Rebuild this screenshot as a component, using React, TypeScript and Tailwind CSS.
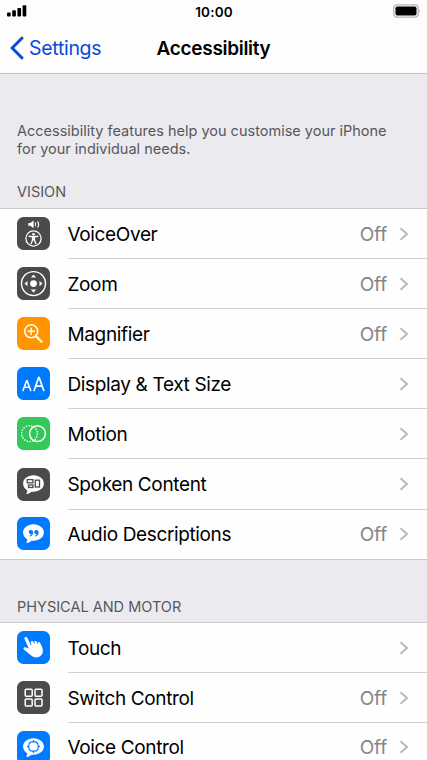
import type { ReactNode } from "react";

const dark = "bg-[#4b4b4b]";
const blue = "bg-[#007aff]";

function Icon({ className, children }: { className: string; children: ReactNode }) {
  return (
    <div className={`mb-px h-[33px] w-[33px] shrink-0 overflow-hidden rounded-[6.5px] text-white ${className}`}>
      <svg viewBox="0 0 33 33" className="h-full w-full" fill="none" stroke="currentColor">
        {children}
      </svg>
    </div>
  );
}

function VoiceOverIcon() {
  return (
    <Icon className={dark}>
      <path d="M11.3 6h2l3.3-2.4v7.6l-3.3-2.4h-2z" fill="currentColor" stroke="none" />
      <path d="M18.2 5.5q1.3 1.9 0 3.8M20.5 4.3q2.3 3.1 0 6.2" strokeWidth="1.1" />
      <circle cx="16.5" cy="21.5" r="7.6" strokeWidth="1.3" />
      <circle cx="16.5" cy="17.3" r="1.4" fill="currentColor" stroke="none" />
      <path
        d="M12.2 19.3l3.2.5h2.2l3.2-.5M16.5 19.7v3M15.6 19.7v3.2l-1.5 3.8M17.4 19.7v3.2l1.5 3.8"
        strokeWidth="1.4"
        strokeLinecap="round"
        strokeLinejoin="round"
      />
    </Icon>
  );
}

function ZoomIcon() {
  return (
    <Icon className={dark}>
      <circle cx="16.5" cy="16.6" r="12" strokeWidth="1.4" />
      <circle cx="16.5" cy="16.6" r="3.4" fill="currentColor" stroke="none" />
      <path
        d="M16.5 7.500l2.600 3.100h-5.200zM16.500 25.700l2.600-3.100h-5.200zM7.400 16.600l3.100-2.600v5.200zM25.600 16.600l-3.100-2.600v5.200z"
        fill="currentColor"
        stroke="none"
      />
    </Icon>
  );
}

function MagnifierIcon() {
  return (
    <Icon className="bg-[#ff9500]">
      <circle cx="14.2" cy="14.3" r="6.5" strokeWidth="1.5" />
      <path d="M14.2 11.100v6.400M11 14.300h6.400" strokeWidth="1.4" strokeLinecap="round" />
      <path d="M19.100 19.200l5.500 5.600" strokeWidth="2.3" strokeLinecap="round" />
    </Icon>
  );
}

function TextSizeIcon() {
  return (
    <Icon className={blue}>
      <path d="M6 23.500l3.600-9.600h.5l3.600 9.600M7.400 20.300h4.900" strokeWidth="1.6" strokeLinecap="round" />
      <path d="M17.100 23.500l4.500-12.800h.6l4.500 12.800M18.700 19.200h6.400" strokeWidth="1.7" strokeLinecap="round" />
    </Icon>
  );
}

function MotionIcon() {
  return (
    <Icon className="bg-[#34c759]">
      <circle cx="12.5" cy="16.6" r="7.9" strokeWidth="1.4" strokeDasharray="1.4 1.35" />
      <circle cx="20.5" cy="16.6" r="7.9" strokeWidth="1.5" />
    </Icon>
  );
}

function Bubble() {
  return (
    <path
      d="M16.5 7.3c5.8 0 10.4 3.6 10.4 8.3s-4.6 8.2-10.4 8.200c-.7 0-1.3 0-1.9-.1-1.3 1.300-3 2-4.800 2.200-.5 0-.6-.4-.3-.8.6-.8.9-1.700.8-2.600-2.600-1.500-4.200-4-4.200-6.900 0-4.700 4.600-8.300 10.400-8.300z"
      fill="currentColor"
      stroke="none"
    />
  );
}

function SpokenContentIcon() {
  return (
    <Icon className={dark}>
      <Bubble />
      <g className="text-[#4b4b4b]" stroke="currentColor" strokeWidth="1.3">
        <rect x="10.2" y="11.6" width="5.7" height="3.2" />
        <rect x="11.5" y="17" width="4.5" height="2.5" />
        <rect x="18.3" y="12.2" width="4.2" height="6.8" />
      </g>
    </Icon>
  );
}

function AudioDescriptionsIcon() {
  return (
    <Icon className={blue}>
      <Bubble />
      <g className="text-[#007aff]" fill="currentColor" stroke="none">
        <path d="M13.900 13c1.400 0 2.300 1 2.300 2.400 0 2-1.300 3.500-3.300 4l-.4-.7c1-.4 1.600-1 1.700-1.700-1.500.2-2.500-.6-2.500-1.900 0-1.200.9-2.100 2.200-2.100z" />
        <path d="M19.400 13c1.400 0 2.300 1 2.300 2.400 0 2-1.300 3.500-3.300 4l-.4-.7c1-.4 1.600-1 1.700-1.700-1.500.2-2.500-.6-2.500-1.900 0-1.200.9-2.100 2.200-2.100z" />
      </g>
    </Icon>
  );
}

function TouchIcon() {
  return (
    <Icon className={blue}>
      <path
        d="M8.300 6.200c.8-.4 1.700 0 2.100.9l3.500 7.100.6-.2-.7-2.600c-.1-.9.400-1.400 1-1.500.7-.1 1.200.3 1.500 1l.9 2.100.4-.1-.3-1.600c0-.8.500-1.200 1.100-1.200.7 0 1.100.4 1.400 1l.8 1.900.3-.1-.1-.9c0-.7.5-1.100 1-1.100.7 0 1.100.4 1.400 1l1.900 4.200c1.600 4 .8 7.700-2.300 9.300-3.500 1.800-6.600 1-9.200-1.300l-6.200-5.200c-.9-.8-1.200-1.600-.8-2.200.5-.7 1.500-.7 2.500-.2l2.800 1.300-4.400-10c-.3-.7 0-1.300.8-1.600z"
        fill="currentColor"
        stroke="none"
      />
    </Icon>
  );
}

function SwitchControlIcon() {
  return (
    <Icon className={dark}>
      <g strokeWidth="1.5">
        <rect x="8.2" y="8.3" width="7" height="7" rx="1" />
        <rect x="18" y="8.3" width="7" height="7" rx="1" />
        <rect x="8.2" y="18" width="7" height="7" rx="1" />
        <rect x="18" y="18" width="7" height="7" rx="1" />
      </g>
    </Icon>
  );
}

function VoiceControlIcon() {
  return (
    <Icon className={blue}>
      <Bubble />
      <g className="text-[#007aff]" stroke="currentColor">
        {/* four arcs, open where the arrows sit */}
        <path
          d="M18.800 10.900a5.100 5.100 0 0 1 2.300 2.300M21.100 17.800a5.100 5.100 0 0 1-2.300 2.300M14.200 20.100a5.100 5.100 0 0 1-2.300-2.300M11.900 13.200a5.100 5.100 0 0 1 2.300-2.300"
          strokeWidth="1.300"
          strokeLinecap="round"
        />
        <path
          d="M16.500 8.700l2 2.700h-4zM16.500 22.300l2-2.700h-4zM9.700 15.500l2.700-2v4zM23.300 15.500l-2.700-2v4z"
          fill="currentColor"
          stroke="none"
        />
      </g>
    </Icon>
  );
}

type Item = { label: string; icon: ReactNode; value?: string };

const vision: Item[] = [
  { label: "VoiceOver", icon: <VoiceOverIcon />, value: "Off" },
  { label: "Zoom", icon: <ZoomIcon />, value: "Off" },
  { label: "Magnifier", icon: <MagnifierIcon />, value: "Off" },
  { label: "Display & Text Size", icon: <TextSizeIcon /> },
  { label: "Motion", icon: <MotionIcon /> },
  { label: "Spoken Content", icon: <SpokenContentIcon /> },
  { label: "Audio Descriptions", icon: <AudioDescriptionsIcon />, value: "Off" },
];

const physical: Item[] = [
  { label: "Touch", icon: <TouchIcon /> },
  { label: "Switch Control", icon: <SwitchControlIcon />, value: "Off" },
  { label: "Voice Control", icon: <VoiceControlIcon />, value: "Off" },
];

function Row({ item }: { item: Item }) {
  return (
    <div className="group flex h-[50.1px] items-center pl-[17px] last:h-[49.4px]">
      {item.icon}
      <div className="ml-[17.5px] flex h-full flex-1 items-center border-b border-[#cfcfd2] pr-[18px] group-last:border-transparent">
        <span className="flex-1 pt-[2.5px] text-[19px] tracking-[-0.36px] text-black">{item.label}</span>
        {item.value && (
          <span className="mr-[12px] pt-[2.5px] text-[19px] tracking-[-0.2px] text-[#858588]">{item.value}</span>
        )}
        <svg viewBox="0 0 10 14" className="h-[14px] w-[10px]" fill="none" stroke="#b9b9bd" strokeWidth="2">
          <path d="M1.500 1.200l6.500 5.800-6.500 5.800" />
        </svg>
      </div>
    </div>
  );
}

function List({ items }: { items: Item[] }) {
  return (
    <div className="border-y border-[#cacace] bg-[#fefefe]">
      {items.map((item) => (
        <Row key={item.label} item={item} />
      ))}
    </div>
  );
}

export default function App() {
  return (
    <div className="h-[760px] w-[427px] overflow-hidden bg-[#ebeaef] font-['Inter',sans-serif]">
      <header className="flex h-[74px] flex-col border-b border-[#c2c1c8] bg-[#fdfdfd]">
        <div className="grid h-[23px] grid-cols-3 items-center pr-[6px] pl-[7px]">
          <svg viewBox="0 0 20 12" className="mb-px h-3 w-5">
            <rect x="0" y="7.5" width="3.7" height="4" rx="1" />
            <rect x="5.2" y="5.3" width="3.7" height="6.2" rx="1" />
            <rect x="10.4" y="3" width="3.7" height="8.5" rx="1" />
            <rect x="15.6" y="0.3" width="3.7" height="11.2" rx="1" />
          </svg>
          <span className="pt-[1.5px] text-center text-[13.5px] font-semibold tracking-[0.2px]">10:00</span>
          <svg viewBox="0 0 28 14" className="mb-px h-[14px] w-7 justify-self-end">
            <rect x="0.8" y="0.8" width="24.4" height="12.4" rx="3.4" fill="none" stroke="#b5b3b7" strokeWidth="1.3" />
            <rect x="2.5" y="2.5" width="21" height="9" rx="1.8" />
            <path d="M26.300 4.800q1.600 2.200 0 4.400z" fill="#b5b3b7" />
          </svg>
        </div>
        <div className="grid h-[50px] grid-cols-[1fr_auto_1fr] items-center">
          <div className="flex items-center text-[#0a4bd6]">
            <svg viewBox="0 0 14 24" className="ml-[10px] h-6 w-[14px]" fill="none" stroke="currentColor" strokeWidth="3">
              <path d="M12.800 1.200L2.200 12l10.600 10.800" />
            </svg>
            <span className="ml-[5px] pt-px text-[19.5px] tracking-[-0.3px]">Settings</span>
          </div>
          <h1 className="pt-[2.5px] text-[19px] font-semibold tracking-[-0.31px]">Accessibility</h1>
        </div>
      </header>

      <p className="mt-[48px] ml-[17px] text-[14.5px] leading-[18px] text-[#58575c]">
        Accessibility features help you customise your iPhone
        <br />
        for your individual needs.
      </p>
      <h2 className="mt-[25px] mb-[7px] ml-[17px] text-[14.5px] leading-[18px] text-[#58575c]">VISION</h2>
      <List items={vision} />
      <h2 className="mt-[38px] mb-[6px] ml-[17px] text-[14.5px] leading-[18px] text-[#58575c]">PHYSICAL AND MOTOR</h2>
      <List items={physical} />
    </div>
  );
}
